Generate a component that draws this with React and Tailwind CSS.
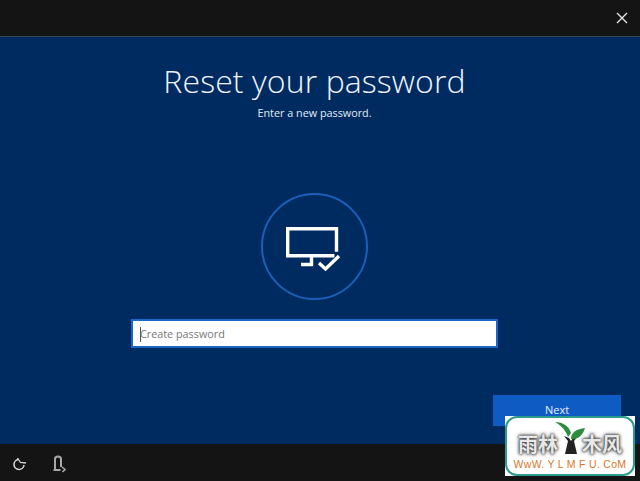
import React from 'react';

function MonitorCheck() {
  return (
    <svg width="56" height="46" viewBox="0 0 56 46" fill="none" stroke="white" strokeWidth="3.4">
      <path d="M50.5 23V1.700H1.700v27h45" strokeLinecap="square" />
      <path d="M25.500 29v8.500H15" />
      <path d="M33 36l6.500 6L53 29" strokeWidth="3.400" />
    </svg>
  );
}

function Watermark() {
  const chars = "text-[20px] leading-none font-bold text-[#e8e8e8] [text-shadow:0_0_4px_#444,0_0_3px_#444,0_0_2px_#555]";
  return (
    <div className="absolute left-[505px] top-[416px] w-[130px] h-[60px] bg-white">
      <div className="w-full h-full rounded-[12px] border-2 border-[#2d9b8c] flex flex-col items-center font-['Noto_Sans_CJK_SC',sans-serif]">
        <div className="flex items-end justify-center h-[37px] w-full">
          <span className={`${chars} mb-[1px]`}>雨林</span>
          <svg width="30" height="33" viewBox="0 0 30 33" className="-mx-[3px] shrink-0">
            <path d="M10 32l3-13-4-5 5 2 2 3 2-3 5-2-4 5 3 13z" fill="#222" />
            <path d="M13 15C11 9 7 4 0 0c8 0 14 4 16 11z" fill="#2d8c3e" />
            <path d="M16 17c0-7 6-10 14-11-2 7-7 12-14 11z" fill="#2d8c3e" />
          </svg>
          <span className={`${chars} mb-[1px]`}>木风</span>
        </div>
        <div className="text-[10.5px] leading-none mt-[4px] text-[#d9772d] font-['Liberation_Sans',sans-serif] tracking-[0.3px] whitespace-pre">WwW. Y L M F U. CoM</div>
      </div>
    </div>
  );
}

export default function App() {
  return (
    <div className="relative w-[640px] h-[481px] overflow-hidden flex flex-col bg-[#002b60] text-white font-['Open_Sans',sans-serif]">
      <div className="h-[37px] shrink-0 bg-[#141414] border-b border-[#3a4350] flex items-center justify-end pr-[12px] pb-[1px]">
        <svg width="12" height="12" viewBox="0 0 12 12" stroke="#e6e6e6" strokeWidth="1.4">
          <path d="M1 1l10 10M11 1L1 11" />
        </svg>
      </div>

      <div className="flex-1 flex flex-col">
        <div className="flex flex-col items-center pr-[11px]">
          <h1 className="mt-[22px] text-[32px] leading-[44px] font-light tracking-[0.1px] text-[#f0f5fb]">Reset your password</h1>
          <p className="text-[10.8px] leading-[14px] mt-[3px] text-[#e4ecf6]">Enter a new password.</p>

          <div className="mt-[73px] w-[107px] h-[107px] rounded-full border-2 border-[#1b5fb8] flex items-center justify-center pr-[1px] pt-[6px]">
            <MonitorCheck />
          </div>

          <div className="mt-[19px] w-[367px] h-[29px] bg-white border-2 border-[#1a67c8] flex items-center pl-[7px] pt-[1px]">
            <span className="w-px h-[15px] bg-[#555]" />
            <span className="text-[10.8px] text-[#777] -ml-px">Create password</span>
          </div>
        </div>

        <div className="flex justify-end pr-[19px] mt-[47px]">
          <button className="w-[128px] h-[31px] bg-[#0f5bc4] text-[11px] text-[#e8f0fb] flex items-center justify-center">Next</button>
        </div>
      </div>

      <div className="h-[37px] shrink-0 bg-[#141414] flex items-center gap-[25px] pl-[11px] pt-[2px]">
        <svg width="16" height="16" viewBox="0 0 16 16" fill="none" stroke="#d4d4d4" strokeWidth="1.6">
          <path d="M7.500 3.500A5 5 0 1 0 13 9" />
          <path d="M6.500 2l3 4.500L15 7" strokeWidth="1.300" />
        </svg>
        <svg width="15" height="18" viewBox="0 0 15 18" fill="none" stroke="#a8a8a8" strokeWidth="2">
          <path d="M3 14V4c0-1.600 1-2.600 3-2.600S9 2.400 9 4v8" />
          <path d="M1.500 15h7" />
          <path d="M10 12l3 2.500-2.500 2.500" strokeWidth="1.600" />
        </svg>
      </div>

      <Watermark />
    </div>
  );
}
